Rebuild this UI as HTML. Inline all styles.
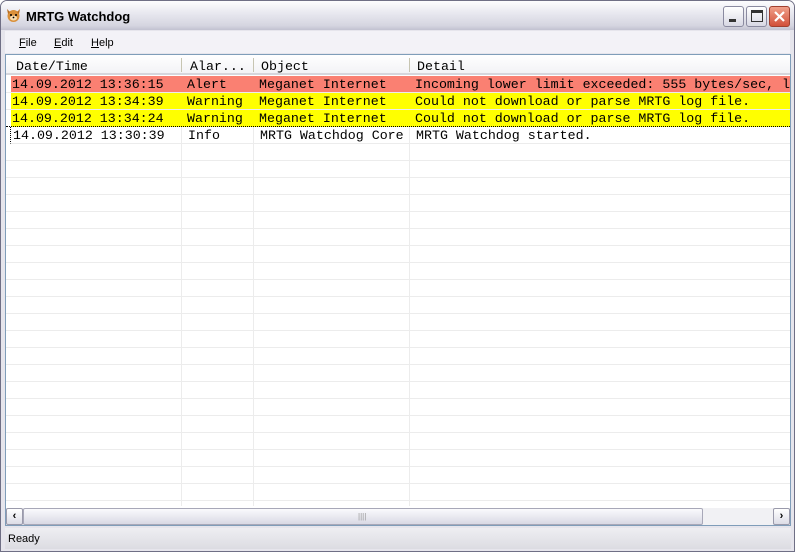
<!DOCTYPE html>
<html><head><style>
*{margin:0;padding:0;box-sizing:border-box}
body{width:795px;height:552px;overflow:hidden;background:#fff;font-family:"Liberation Sans",Tahoma,sans-serif;position:relative}
.win{position:absolute;left:0;top:0;width:795px;height:552px;background:#e6e5ec;border:1px solid #6f6f85;border-radius:7px 7px 0 0}
.title{position:absolute;left:0;top:0;width:793px;height:29px;background:linear-gradient(#fdfdfe,#e9e9f0 40%,#d5d5e0 85%,#c2c2d0);border-radius:6px 6px 0 0}
.title span{position:absolute;left:25px;top:8px;font-weight:bold;font-size:13px;color:#000}
.btn{position:absolute;top:5px;width:21px;height:21px;border:1px solid #8a8aa0;border-radius:3px;background:linear-gradient(#fff,#d8d8e4)}
.menu{position:absolute;left:4px;top:30px;width:785px;height:22px;background:#f3f2f7;font-size:11px}
.menu span{position:absolute;top:6px}
.lv{position:absolute;left:4px;top:53px;width:786px;height:472px;border:1px solid #7f9db9;background:#fff;overflow:hidden;font-family:"Liberation Mono",monospace;font-size:13.3px}
.hdr{position:absolute;left:0;top:0;width:784px;height:20px;background:linear-gradient(#fff,#f3f3f6);border-bottom:2px solid #d6d6dc}
.hdr span{position:absolute;top:4px}
.sep{position:absolute;top:3px;width:1px;height:14px;background:#c7c5b2}
.vl{position:absolute;top:21px;width:1px;height:430px;background:#ececec}
.row{position:absolute;left:0;width:784px;height:17px;border-bottom:1px solid #ececec}
.row span{position:absolute;top:1px;line-height:16px}
.sb{position:absolute;left:0;top:453px;width:784px;height:17px;background:#f1f1f4}
.thumb{position:absolute;left:17px;top:0;width:680px;height:17px;border:1px solid #a8a8b8;border-radius:2px;background:linear-gradient(#fafafd,#d9d9e4)}
.arr{position:absolute;top:0;width:17px;height:17px;border:1px solid #9a9aab;border-radius:2px;background:linear-gradient(#fff,#dcdce6);font-size:11px;text-align:center;line-height:15px;font-family:"Liberation Sans";font-weight:bold}
.status{position:absolute;left:4px;top:527px;width:786px;height:21px;background:linear-gradient(#eeeef2,#dcdce2);font-size:11px}
</style></head><body>
<div class="win">
<div class="title">
<svg style="position:absolute;left:5px;top:7px" width="15" height="15" viewBox="0 0 15 15"><circle cx="7.5" cy="8" r="6" fill="#d9903a"/><polygon points="1,1 4,4 2,6" fill="#b86d20"/><polygon points="14,1 11,4 13,6" fill="#b86d20"/><ellipse cx="7.5" cy="10" rx="3.5" ry="2.5" fill="#f6dcb0"/><circle cx="5" cy="7" r="1" fill="#000"/><circle cx="10" cy="7" r="1" fill="#000"/><circle cx="7.5" cy="9.5" r=".9" fill="#000"/></svg>
<span>MRTG Watchdog</span>
<div class="btn" style="left:722px"><div style="position:absolute;left:5px;top:12px;width:7px;height:3px;background:#333"></div></div>
<div class="btn" style="left:745px"><div style="position:absolute;left:4px;top:3px;width:12px;height:12px;border:1px solid #333;border-top-width:3px"></div></div>
<div class="btn" style="left:768px;background:linear-gradient(#f0a08a,#d2503a);border-color:#a04030"><svg width="19" height="19" viewBox="0 0 19 19"><path d="M5 5L14 14M14 5L5 14" stroke="#fff" stroke-width="2.2"/></svg></div>
</div>
<div class="menu"><span style="left:14px"><u>F</u>ile</span><span style="left:49px"><u>E</u>dit</span><span style="left:86px"><u>H</u>elp</span></div>
<div class="lv">
<div class="hdr"><span style="left:10px">Date/Time</span><div class="sep" style="left:175px"></div><span style="left:184px">Alar...</span><div class="sep" style="left:247px"></div><span style="left:255px">Object</span><div class="sep" style="left:403px"></div><span style="left:411px">Detail</span></div>
<div class="vl" style="left:175px"></div><div class="vl" style="left:247px"></div><div class="vl" style="left:403px"></div>
<div class="row" style="top:21px;background:linear-gradient(90deg,#fff 5px,#fa8072 5px)"><span style="left:6px">14.09.2012 13:36:15</span><span style="left:181px">Alert</span><span style="left:253px">Meganet Internet</span><span style="left:409px;white-space:nowrap">Incoming lower limit exceeded: 555 bytes/sec, l</span></div>
<div class="row" style="top:38px;background:linear-gradient(90deg,#fff 5px,#ff0 5px)"><span style="left:6px">14.09.2012 13:34:39</span><span style="left:181px">Warning</span><span style="left:253px">Meganet Internet</span><span style="left:409px">Could not download or parse MRTG log file.</span></div>
<div class="row" style="top:55px;background:linear-gradient(90deg,#fff 5px,#ff0 5px);border-bottom:1px dotted #000"><span style="left:6px">14.09.2012 13:34:24</span><span style="left:181px">Warning</span><span style="left:253px">Meganet Internet</span><span style="left:409px">Could not download or parse MRTG log file.</span></div>
<div class="row" style="top:72px;border-left:1px dotted #000;left:4px;width:780px"><span style="left:2px">14.09.2012 13:30:39</span><span style="left:177px">Info</span><span style="left:249px">MRTG Watchdog Core</span><span style="left:405px">MRTG Watchdog started.</span></div>
<div id="g"></div>
<div class="sb"><div class="arr" style="left:0">&lsaquo;</div><div class="thumb"><span style="position:absolute;left:334px;top:3px;font-size:8px;color:#999;font-family:'Liberation Sans'">||||</span></div><div class="arr" style="left:767px">&rsaquo;</div></div>
</div>
<div class="status"><span style="position:absolute;left:3px;top:5px">Ready</span></div>
</div>
<script>
var g=document.getElementById('g'),h='';for(var i=4;i<25;i++){h+='<div class="row" style="top:'+(21+17*i)+'px"></div>'}g.innerHTML=h;
</script>
</body></html>
